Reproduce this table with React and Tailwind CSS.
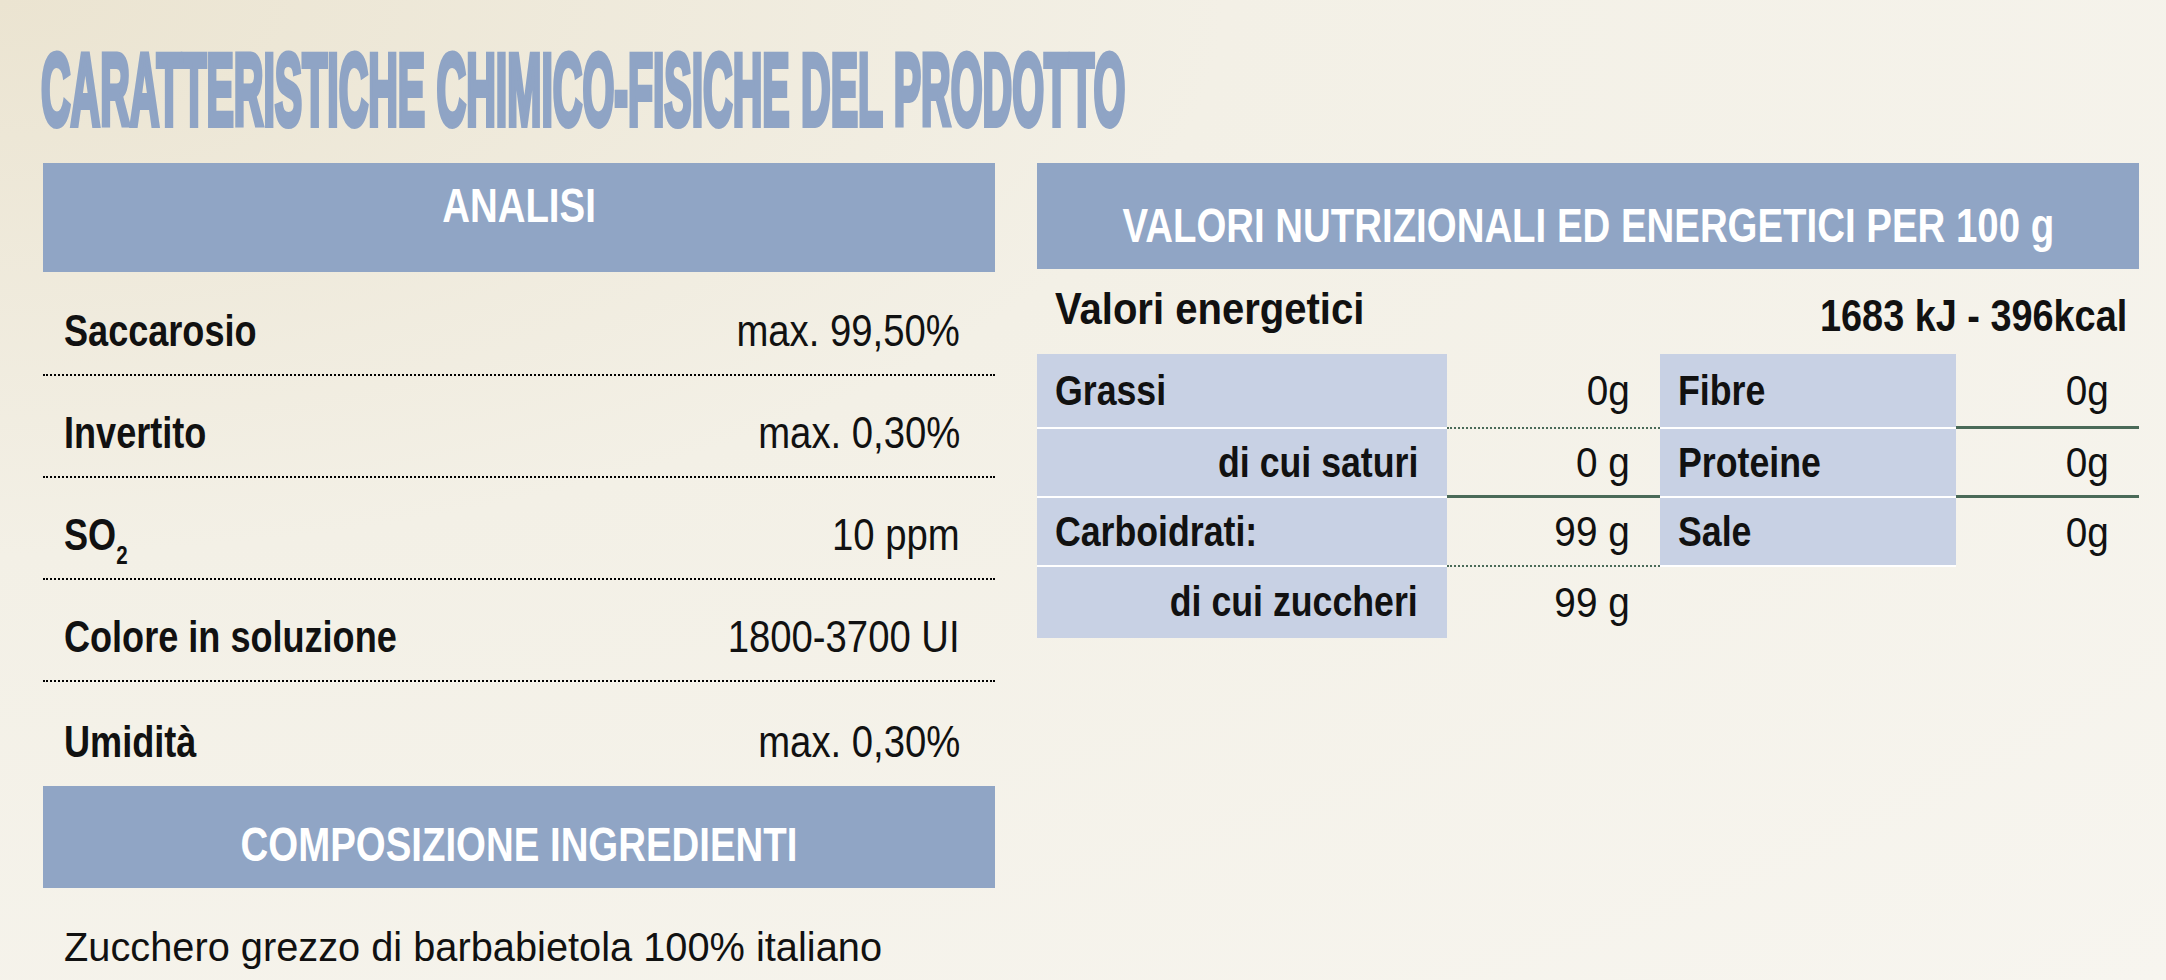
const font = "font-['Liberation_Sans',Arial,sans-serif]"

const analisi = [
    { label: 'Saccarosio', value: 'max. 99,50%', h: 'h-[104px]' },
    { label: 'Invertito', value: 'max. 0,30%', h: 'h-[102px]' },
    { label: 'SO', sub: '2', value: '10 ppm', h: 'h-[102px]' },
    { label: 'Colore in soluzione', value: '1800-3700 UI', h: 'h-[102px]' },
]

// testo stretto: il font originale è condensato, lo comprimiamo in orizzontale
function T({ children, className = '' }) {
    return <span className={`inline-block whitespace-nowrap ${className}`}>{children}</span>
}

function Header({ children, className }) {
    return (
        <div className={`flex justify-center items-start bg-[#90a5c5] text-white font-bold text-[48px] leading-none ${className}`}>
            <T className="shrink-0 origin-center scale-x-[0.8]">{children}</T>
        </div>
    )
}

function Cell({ children, className = '' }) {
    return <div className={`flex items-center text-[43px] leading-none ${className}`}>{children}</div>
}

function Label({ children, right }) {
    return <T className={`font-bold scale-x-[0.83] ${right ? 'origin-right' : 'origin-left'}`}>{children}</T>
}

function Val({ children }) {
    return <T className="origin-right scale-x-[0.9]">{children}</T>
}

function App() {
    return (
        <div className={`h-[980px] w-full overflow-hidden bg-[radial-gradient(ellipse_at_top_left,#ebe4d1_0%,#f3f0e6_40%,#f7f5ef_100%)] text-[#111] ${font}`}>
            <div className="h-[141px] pt-[39px] pl-[41px] whitespace-nowrap">
                <h1 className="inline-block origin-left scale-x-[0.402] text-[102px] font-bold leading-none text-[#8fa4c5] [-webkit-text-stroke:6px_#8fa4c5]">
                    CARATTERISTICHE CHIMICO-FISICHE DEL PRODOTTO
                </h1>
            </div>

            <div className="flex gap-[42px] pl-[43px] pt-[22px]">
                {/* colonna sinistra */}
                <div className="w-[952px] flex flex-col">
                    <Header className="h-[109px] pt-[19px]">ANALISI</Header>
                    {analisi.map((r) => (
                        <div key={r.label} className={`${r.h} flex items-end justify-between pl-[21px] pr-[35px] pb-[21px] border-b-2 border-dotted border-black text-[44px] leading-none`}>
                            <T className="font-bold origin-left scale-x-[0.82]">
                                {r.label}
                                {r.sub && <span className="relative top-[14px] text-[25px]">{r.sub}</span>}
                            </T>
                            <T className="origin-right scale-x-[0.87]">{r.value}</T>
                        </div>
                    ))}
                    <div className="h-[104px] flex items-end justify-between pl-[21px] pr-[35px] pb-[22px] text-[44px] leading-none">
                        <T className="font-bold origin-left scale-x-[0.82]">Umidità</T>
                        <T className="origin-right scale-x-[0.87]">max. 0,30%</T>
                    </div>
                    <Header className="h-[102px] pt-[35px]">COMPOSIZIONE INGREDIENTI</Header>
                    <div className="pl-[21px] pt-[39px] text-[41px] leading-none">
                        <T className="origin-left scale-x-[0.97]">Zucchero grezzo di barbabietola 100% italiano</T>
                    </div>
                </div>

                {/* colonna destra */}
                <div className="w-[1102px] flex flex-col">
                    <Header className="h-[106px] pt-[39px]">VALORI NUTRIZIONALI ED ENERGETICI PER 100 g</Header>
                    <div className="h-[85px] flex items-end justify-between pl-[18px] pr-[12px] font-bold text-[44px] leading-none">
                        <T className="pb-[23px] origin-left scale-x-[0.91]">Valori energetici</T>
                        <T className="pb-[16px] origin-right scale-x-[0.86]">1683 kJ - 396kcal</T>
                    </div>
                    <div className="grid grid-cols-[410px_213px_296px_183px] grid-rows-[75px_69px_69px_71px]">
                        <Cell className="bg-[#c8d1e4] border-b-2 border-white pl-[18px]"><Label>Grassi</Label></Cell>
                        <Cell className="justify-end pr-[30px] border-b-2 border-dotted border-[#4a6a58]"><Val>0g</Val></Cell>
                        <Cell className="bg-[#c8d1e4] border-b-2 border-white pl-[18px]"><Label>Fibre</Label></Cell>
                        <Cell className="justify-end pr-[30px] border-b-[3px] border-[#4a6a58]"><Val>0g</Val></Cell>

                        <Cell className="bg-[#c8d1e4] border-b-2 border-white justify-end pr-[29px]"><Label right>di cui saturi</Label></Cell>
                        <Cell className="justify-end pr-[30px] border-b-[3px] border-[#4a6a58]"><Val>0 g</Val></Cell>
                        <Cell className="bg-[#c8d1e4] border-b-2 border-white pl-[18px]"><Label>Proteine</Label></Cell>
                        <Cell className="justify-end pr-[30px] border-b-[3px] border-[#4a6a58]"><Val>0g</Val></Cell>

                        <Cell className="bg-[#c8d1e4] border-b-2 border-white pl-[18px]"><Label>Carboidrati:</Label></Cell>
                        <Cell className="justify-end pr-[30px] border-b-2 border-dotted border-[#4a6a58]"><Val>99 g</Val></Cell>
                        <Cell className="bg-[#c8d1e4] border-b-2 border-white pl-[18px]"><Label>Sale</Label></Cell>
                        <Cell className="justify-end pr-[30px]"><Val>0g</Val></Cell>

                        <Cell className="bg-[#c8d1e4] border-b-2 border-transparent justify-end pr-[29px]"><Label right>di cui zuccheri</Label></Cell>
                        <Cell className="justify-end pr-[30px]"><Val>99 g</Val></Cell>
                        <div />
                        <div />
                    </div>
                </div>
            </div>
        </div>
    )
}

export default App
